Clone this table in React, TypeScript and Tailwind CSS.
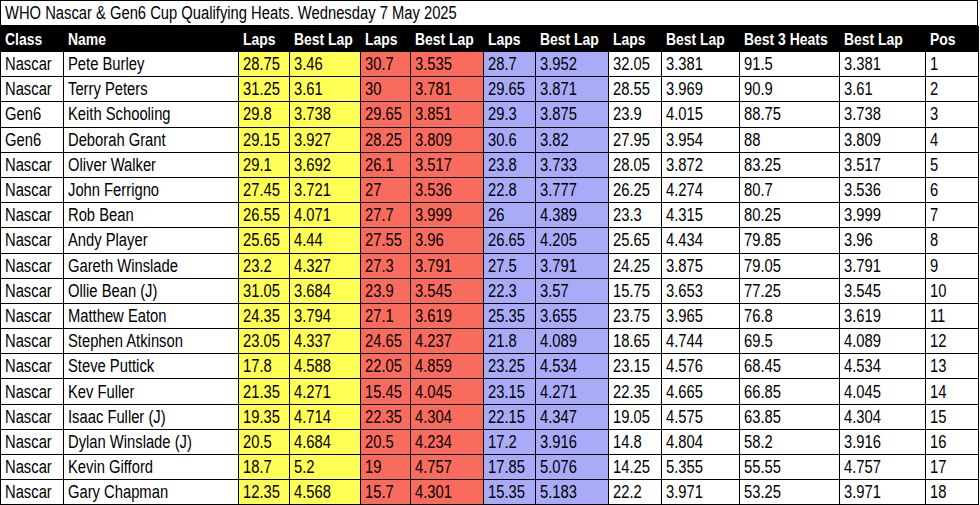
type Row = [string, string, ...string[]];

const ROWS: Row[] = [
  ["Nascar", "Pete Burley", "28.75", "3.46", "30.7", "3.535", "28.7", "3.952", "32.05", "3.381", "91.5", "3.381", "1"],
  ["Nascar", "Terry Peters", "31.25", "3.61", "30", "3.781", "29.65", "3.871", "28.55", "3.969", "90.9", "3.61", "2"],
  ["Gen6", "Keith Schooling", "29.8", "3.738", "29.65", "3.851", "29.3", "3.875", "23.9", "4.015", "88.75", "3.738", "3"],
  ["Gen6", "Deborah Grant", "29.15", "3.927", "28.25", "3.809", "30.6", "3.82", "27.95", "3.954", "88", "3.809", "4"],
  ["Nascar", "Oliver Walker", "29.1", "3.692", "26.1", "3.517", "23.8", "3.733", "28.05", "3.872", "83.25", "3.517", "5"],
  ["Nascar", "John Ferrigno", "27.45", "3.721", "27", "3.536", "22.8", "3.777", "26.25", "4.274", "80.7", "3.536", "6"],
  ["Nascar", "Rob Bean", "26.55", "4.071", "27.7", "3.999", "26", "4.389", "23.3", "4.315", "80.25", "3.999", "7"],
  ["Nascar", "Andy Player", "25.65", "4.44", "27.55", "3.96", "26.65", "4.205", "25.65", "4.434", "79.85", "3.96", "8"],
  ["Nascar", "Gareth Winslade", "23.2", "4.327", "27.3", "3.791", "27.5", "3.791", "24.25", "3.875", "79.05", "3.791", "9"],
  ["Nascar", "Ollie Bean (J)", "31.05", "3.684", "23.9", "3.545", "22.3", "3.57", "15.75", "3.653", "77.25", "3.545", "10"],
  ["Nascar", "Matthew Eaton", "24.35", "3.794", "27.1", "3.619", "25.35", "3.655", "23.75", "3.965", "76.8", "3.619", "11"],
  ["Nascar", "Stephen Atkinson", "23.05", "4.337", "24.65", "4.237", "21.8", "4.089", "18.65", "4.744", "69.5", "4.089", "12"],
  ["Nascar", "Steve Puttick", "17.8", "4.588", "22.05", "4.859", "23.25", "4.534", "23.15", "4.576", "68.45", "4.534", "13"],
  ["Nascar", "Kev Fuller", "21.35", "4.271", "15.45", "4.045", "23.15", "4.271", "22.35", "4.665", "66.85", "4.045", "14"],
  ["Nascar", "Isaac Fuller (J)", "19.35", "4.714", "22.35", "4.304", "22.15", "4.347", "19.05", "4.575", "63.85", "4.304", "15"],
  ["Nascar", "Dylan Winslade (J)", "20.5", "4.684", "20.5", "4.234", "17.2", "3.916", "14.8", "4.804", "58.2", "3.916", "16"],
  ["Nascar", "Kevin Gifford", "18.7", "5.2", "19", "4.757", "17.85", "5.076", "14.25", "5.355", "55.55", "4.757", "17"],
  ["Nascar", "Gary Chapman", "12.35", "4.568", "15.7", "4.301", "15.35", "5.183", "22.2", "3.971", "53.25", "3.971", "18"],
];

const HEADERS = ["Class", "Name", "Laps", "Best Lap", "Laps", "Best Lap", "Laps", "Best Lap", "Laps", "Best Lap", "Best 3 Heats", "Best Lap", "Pos"];

const COLS = [
  "w-[63px]", "w-[175px]", "w-[51px]", "w-[71px]", "w-[50px]", "w-[73px]", "w-[52px]",
  "w-[73px]", "w-[53px]", "w-[78px]", "w-[100px]", "w-[86px]", "w-[53px]",
];

// heat 1 yellow, heat 2 red, heat 3 blue, the rest white
function cellBg(idx: number) {
  if (idx === 2 || idx === 3) return "bg-[#ffff55]";
  if (idx === 4 || idx === 5) return "bg-[#f96b5c]";
  if (idx === 6 || idx === 7) return "bg-[#a9abf8]";
  return "bg-white";
}

// no narrow face installed, so squeeze Liberation Sans to Arial Narrow's width
function Narrow({ children }: { children: React.ReactNode }) {
  return <span className="inline-block origin-left scale-x-[0.82] whitespace-nowrap">{children}</span>;
}

export default function App() {
  return (
    <div className="h-[505px] w-[980px] overflow-hidden bg-white font-['Liberation_Sans',Arial,sans-serif] text-[18px] leading-none text-black">
      <div className="flex h-[26px] w-[978px] items-center border border-black px-[4px]">
        <Narrow>WHO Nascar &amp; Gen6 Cup Qualifying Heats. Wednesday 7 May 2025</Narrow>
      </div>
      <table className="w-[978px] table-fixed border-collapse">
        <colgroup>
          {COLS.map((w, i) => (
            <col key={i} className={w} />
          ))}
        </colgroup>
        <thead>
          <tr className="h-[25px] bg-black text-white">
            {HEADERS.map((h, i) => (
              <th key={i} className="overflow-visible whitespace-nowrap border border-black p-0 px-[4px] text-left text-[17px] font-bold">
                <Narrow>{h}</Narrow>
              </th>
            ))}
          </tr>
        </thead>
        <tbody>
          {ROWS.map((row) => (
            <tr key={row[1]} className="h-[25.2px]">
              {row.map((v, i) => (
                <td key={i} className={`overflow-visible whitespace-nowrap border border-black p-0 px-[4px] ${cellBg(i)}`}>
                  <Narrow>{v}</Narrow>
                </td>
              ))}
            </tr>
          ))}
        </tbody>
      </table>
    </div>
  );
}
